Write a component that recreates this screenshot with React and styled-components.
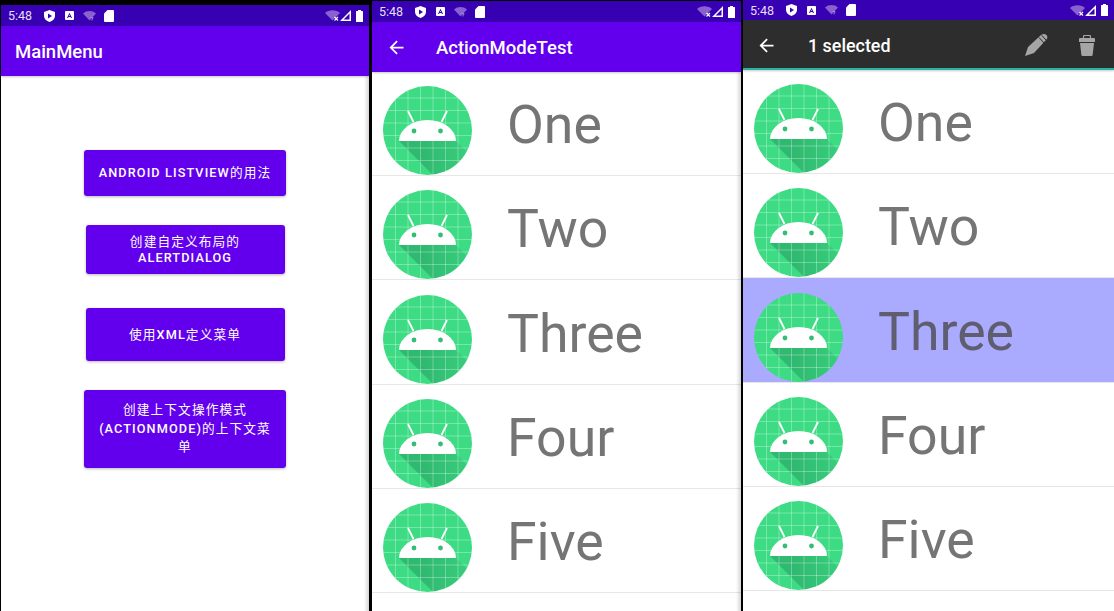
import React from "react";
import styled, { createGlobalStyle } from "styled-components";

const GlobalStyle = createGlobalStyle`
  html, body {
    margin: 0;
    padding: 0;
    height: 611px;
    overflow: hidden;
    background: #000;
    font-family: Roboto, "Noto Sans CJK SC", sans-serif;
  }
`;

const Page = styled.div`
  display: flex;
  width: 1114px;
  height: 611px;
  padding-left: 1px;
  box-sizing: border-box;
  background: #000;
`;

const Phone = styled.div`
  flex: none;
  width: ${(p) => p.$width}px;
  margin-top: ${(p) => p.$top}px;
  margin-right: ${(p) => p.$gap}px;
  display: flex;
  flex-direction: column;
  background: #fff;
  overflow: hidden;
  position: relative;
  &::after {
    content: "";
    position: absolute;
    top: 0;
    right: 0;
    bottom: 0;
    width: ${(p) => (p.$shade ? 5 : 0)}px;
    background: linear-gradient(to right, rgba(0, 0, 0, 0), rgba(0, 0, 0, 0.16));
  }
`;

const StatusBar = styled.div`
  flex: none;
  height: ${(p) => p.$height}px;
  background: #3700b3;
  display: flex;
  align-items: center;
  padding: 0 6px 0 7px;
  color: #e6dff7;
  font-size: 12.5px;
  position: relative;
  z-index: 1;
`;

const Clock = styled.span`
  width: 36px;
`;

const StatusLeft = styled.div`
  display: flex;
  align-items: center;
  flex: 1;
`;

const StatusRight = styled.div`
  display: flex;
  align-items: center;
`;

const StatusGlyph = styled.svg`
  flex: none;
  margin-left: ${(p) => p.$left || 0}px;
`;

const AppBar = styled.div`
  flex: none;
  box-sizing: border-box;
  height: ${(p) => p.$height}px;
  padding-top: ${(p) => (p.$teal ? 2 : 1)}px;
  background: ${(p) => p.$bg};
  display: flex;
  align-items: center;
  color: #fff;
  position: relative;
  z-index: 1;
  box-shadow: 0 1px 2px rgba(0, 0, 0, 0.22);
  border-bottom: ${(p) => (p.$teal ? "2px solid #26b5a4" : "none")};
`;

const BarTitle = styled.div`
  font-size: 18.5px;
  font-weight: 500;
  flex: 1;
  margin-left: ${(p) => p.$indent}px;
`;

const SelectedTitle = styled(BarTitle)`
  font-size: 17.9px;
`;

const BackIcon = styled.svg`
  width: 21px;
  height: 21px;
  margin-left: ${(p) => p.$left}px;
  fill: #fff;
  flex: none;
`;

const ActionIcon = styled.svg`
  flex: none;
  width: ${(p) => p.$width}px;
  height: ${(p) => p.$height}px;
  margin-right: ${(p) => p.$right}px;
  fill: #a5a5a5;
`;

const Menu = styled.div`
  display: flex;
  flex-direction: column;
  align-items: center;
  padding-top: 74px;
`;

const MenuButton = styled.div`
  width: ${(p) => p.$width}px;
  height: ${(p) => p.$height}px;
  margin-bottom: ${(p) => p.$after}px;
  box-sizing: border-box;
  padding: 0 13px;
  background: #6200ee;
  border-radius: 3px;
  box-shadow: 0 1px 3px rgba(0, 0, 0, 0.28);
  display: flex;
  align-items: center;
  justify-content: center;
  text-align: center;
  color: #fff;
  font-size: 12.7px;
  font-weight: 500;
  letter-spacing: 1.1px;
  line-height: ${(p) => p.$lead}px;
  text-transform: uppercase;
`;

const ButtonText = styled.span`
  display: block;
`;

const Han = styled.span`
  font-weight: 400;
`;

const Row = styled.div`
  flex: none;
  height: 103.2px;
  box-sizing: content-box;
  border-bottom: 1px solid #e7e7e7;
  display: flex;
  align-items: flex-end;
  padding-left: 11px;
  background: ${(p) => (p.$selected ? "#aaaaff" : "transparent")};
`;

const RowLabel = styled.div`
  margin: 0 0 23px 35px;
  font-size: 53.6px;
  color: ${(p) => (p.$selected ? "#5e5e70" : "#757575")};
  line-height: 54px;
`;

const Avatar = styled.svg`
  width: 89px;
  height: 89px;
  flex: none;
`;

const Grid = [12.5, 25, 37.5, 50, 62.5, 75];

const AndroidAvatar = () => {
  const id = React.useId();
  return (
    <Avatar viewBox="0 0 89 89">
      <defs>
        <clipPath id={`${id}c`}>
          <circle cx="44.5" cy="44.5" r="44.5" />
        </clipPath>
        <linearGradient id={`${id}s`} gradientUnits="userSpaceOnUse" x1="40" y1="0" x2="88" y2="0">
          <stop offset="0" stopColor="#0b5a3a" stopOpacity="0.27" />
          <stop offset="1" stopColor="#0b5a3a" stopOpacity="0.1" />
        </linearGradient>
      </defs>
      <g clipPath={`url(#${id}c)`}>
        <rect width="89" height="89" fill="#3ddc84" />
        <polygon points="16,55 73,55 107,89 50,89" fill={`url(#${id}s)`} />
        {Grid.map((v) => (
          <g key={v} stroke="#fff" strokeOpacity="0.3" strokeWidth="1">
            <line x1={v} y1="0" x2={v} y2="89" />
            <line x1="0" y1={v - 0.5} x2="89" y2={v - 0.5} />
          </g>
        ))}
      </g>
      <path d="M16 55a28.5 21 0 0 1 57 0z" fill="#fff" />
      <path d="M25 25l5.500 11M64 25l-5.500 11" stroke="#fff" strokeWidth="1.8" />
      <circle cx="31" cy="45" r="2.4" fill="#34bd75" />
      <circle cx="57.5" cy="45" r="2.4" fill="#34bd75" />
    </Avatar>
  );
};

const StatusIcons = () => (
  <>
    <StatusLeft>
      <StatusGlyph width="11" height="12" viewBox="0 0 11 12">
        <path d="M5.500 0L11 2v4c0 3-2.400 5-5.500 6C2.400 11 0 9 0 6V2z" fill="#fff" />
        <path d="M4 3.500l4 2.500-4 2.500z" fill="#3700b3" />
      </StatusGlyph>
      <StatusGlyph $left={10} width="9" height="9" viewBox="0 0 9 9">
        <rect width="9" height="9" rx="1" fill="#fff" />
        <path d="M4.500 1.800L7 7H5.900l-.4-1H3.500l-.4 1H2zM4 5h1L4.500 3.600z" fill="#3700b3" fillRule="evenodd" />
      </StatusGlyph>
      <StatusGlyph $left={9} width="13" height="10" viewBox="0 0 13 10">
        <path d="M0 2.500C3.500-.8 9.500-.8 13 2.500L6.500 9.500z" fill="#8a62cf" />
        <text x="7.500" y="9.800" fontSize="6" fill="#d8c9f0" fontFamily="Roboto">?</text>
      </StatusGlyph>
      <StatusGlyph $left={8} width="10" height="12" viewBox="0 0 10 12">
        <path d="M3.500 0H9a1 1 0 0 1 1 1v10a1 1 0 0 1-1 1H1a1 1 0 0 1-1-1V3.500z" fill="#fff" />
      </StatusGlyph>
    </StatusLeft>
    <StatusRight>
      <StatusGlyph width="15" height="11" viewBox="0 0 15 11">
        <path d="M0 3C3.500-.6 11.500-.6 15 3L7.500 10.500z" fill="#8a62cf" />
        <path d="M9.500 7l3.500 3.500M13 7L9.500 10.500" stroke="#fff" strokeWidth="1.1" />
      </StatusGlyph>
      <StatusGlyph width="11" height="11" viewBox="0 0 11 11">
        <path d="M11 0v11H0zM9.500 3.500L3.600 9.500H9.500z" fill="#fff" fillRule="evenodd" />
      </StatusGlyph>
      <StatusGlyph $left={5} width="7" height="12" viewBox="0 0 7 12">
        <path d="M2 0h3v1h1.500a.5.500 0 0 1 .5.500v10a.5.500 0 0 1-.5.500H.5a.5.500 0 0 1-.5-.5v-10A.5.500 0 0 1 .5 1H2z" fill="#fff" />
      </StatusGlyph>
    </StatusRight>
  </>
);

const Status = ({ height }) => (
  <StatusBar $height={height}>
    <Clock>5:48</Clock>
    <StatusIcons />
  </StatusBar>
);

const Back = ({ left }) => (
  <BackIcon $left={left} viewBox="0 0 24 24">
    <path d="M20 11H7.830l5.590-5.590L12 4l-8 8 8 8 1.410-1.410L7.830 13H20v-2z" />
  </BackIcon>
);

const names = ["One", "Two", "Three", "Four", "Five"];

const List = ({ selected }) =>
  names.map((name) => (
    <Row key={name} $selected={name === selected}>
      <AndroidAvatar />
      <RowLabel $selected={name === selected}>{name}</RowLabel>
    </Row>
  ));

export default function App() {
  return (
    <Page>
      <GlobalStyle />
      <Phone $width={368} $top={5} $gap={3} $shade>
        <Status height={21} />
        <AppBar $height={50} $bg="#6200ee">
          <BarTitle $indent={14}>MainMenu</BarTitle>
        </AppBar>
        <Menu>
          <MenuButton $width={202} $height={46} $after={29} $lead={18}>
            <ButtonText>Android ListView<Han>的用法</Han></ButtonText>
          </MenuButton>
          <MenuButton $width={199} $height={49} $after={34} $lead={16}>
            <ButtonText><Han>创建自定义布局的</Han>AlertDialog</ButtonText>
          </MenuButton>
          <MenuButton $width={199} $height={53} $after={29} $lead={18}>
            <ButtonText><Han>使用</Han>XML<Han>定义菜单</Han></ButtonText>
          </MenuButton>
          <MenuButton $width={202} $height={78} $after={0} $lead={18.5}>
            <ButtonText><Han>创建上下文操作模式</Han>(ActionMode)<Han>的上下文菜</Han><Han>单</Han></ButtonText>
          </MenuButton>
        </Menu>
      </Phone>
      <Phone $width={369} $top={1} $gap={2} $shade>
        <Status height={21} />
        <AppBar $height={50} $bg="#6200ee">
          <Back left={14} />
          <BarTitle $indent={29}>ActionModeTest</BarTitle>
        </AppBar>
        <List />
      </Phone>
      <Phone $width={371} $top={0} $gap={0}>
        <Status height={20} />
        <AppBar $height={50} $bg="#2d2d2d" $teal>
          <Back left={12.5} />
          <SelectedTitle $indent={31.5}>1 selected</SelectedTitle>
          <ActionIcon $width={24} $height={24} $right={31} viewBox="0 0 24 24">
            <path d="M1 23L4 14 17 2Q20 0 22.500 2 24.500 4.500 22 7L10 20z" />
            <path d="M15 4.500l5 5.500M17.800 2.300l4.400 5" stroke="#2d2d2d" strokeWidth="1" fill="none" />
          </ActionIcon>
          <ActionIcon $width={16} $height={21} $right={19} viewBox="0 0 16 21">
            <path d="M4.500 3.500V1.500a1 1 0 0 1 1-1h5a1 1 0 0 1 1 1v2" stroke="#a5a5a5" strokeWidth="1.2" fill="none" />
            <path d="M1 3h14a1 1 0 0 1 1 1v3H0V4a1 1 0 0 1 1-1z" />
            <path d="M1 8h14l-1.300 11.500a1.500 1.500 0 0 1-1.500 1.500H3.800a1.500 1.500 0 0 1-1.500-1.500z" />
          </ActionIcon>
        </AppBar>
        <List selected="Three" />
      </Phone>
    </Page>
  );
}
